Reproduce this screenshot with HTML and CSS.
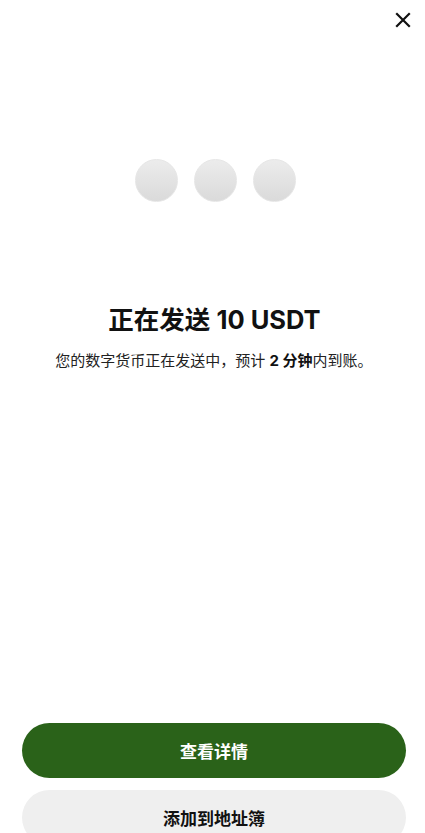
FILE: index.html
```html
<!DOCTYPE html>
<html lang="zh">
<head>
<meta charset="utf-8">
<link rel="stylesheet" href="styles.css">
</head>
<body>
<div class="page">
  <div class="topbar">
    <button class="close" aria-label="关闭">
      <svg width="16" height="16" viewBox="0 0 16 16"><path d="M2 2L14 14M14 2L2 14" stroke="#111" stroke-width="2.2" stroke-linecap="square"/></svg>
    </button>
  </div>
  <div class="dots">
    <span class="dot"></span><span class="dot"></span><span class="dot"></span>
  </div>
  <h1 class="title">正在发送 10 USDT</h1>
  <p class="sub">您的数字货币正在发送中，预计 <b>2 分钟</b>内到账。</p>
  <div class="spacer"></div>
  <div class="actions">
    <button class="btn primary">查看详情</button>
    <button class="btn secondary">添加到地址簿</button>
  </div>
</div>
</body>
</html>
```
FILE: styles.css
```css
* { box-sizing: border-box; }
html, body { margin: 0; padding: 0; background: #fff; }
body { font-family: "Inter", "Noto Sans CJK SC", "Noto Sans", sans-serif; color: #111; }
.page { height: 833px; overflow: hidden; display: flex; flex-direction: column; }
.topbar { height: 40px; display: flex; justify-content: flex-end; align-items: center; padding-right: 14px; }
.close { border: 0; background: none; padding: 0; width: 16px; height: 16px; display: flex; }
.dots { margin-top: 119px; display: flex; justify-content: center; gap: 16px; padding-left: 5px; }
.dot { width: 43px; height: 43px; border-radius: 50%; background: linear-gradient(#ececec, #dadada); border: 1px solid #e6e6e6; }
.title { margin: 101px 0 0; text-align: center; font-size: 25.5px; font-weight: 700; line-height: 34px; padding-left: 4px; }
.sub { margin: 14px 0 0; text-align: center; font-size: 15px; line-height: 20px; color: #222; padding-left: 3px; }
.sub b { font-weight: 700; color: #111; }
.spacer { flex: 1; }
.actions { display: flex; flex-direction: column; gap: 12px; padding: 0 19px 0 22px; margin-bottom: -12px; }
.btn { border: 0; border-radius: 28px; height: 55px; font-family: inherit; font-size: 17px; font-weight: 700; width: 100%; }
.primary { background: #2a6219; color: #fff; }
.secondary { background: #efefef; color: #111; }
```
